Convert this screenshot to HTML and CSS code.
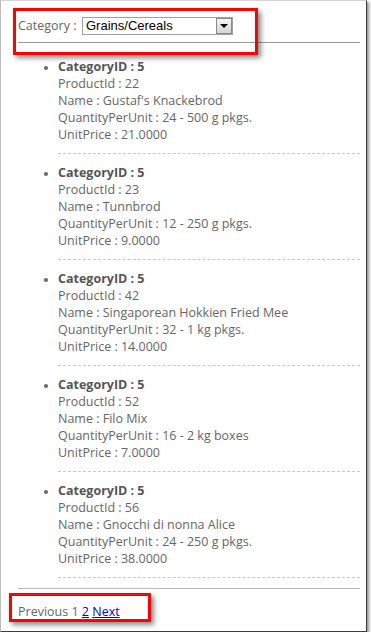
FILE: index.html
```html
<!DOCTYPE html>
<html lang="en">
<head>
  <meta charset="UTF-8">
  <meta name="viewport" content="width=device-width, initial-scale=1.0">
  <title>Products by Category</title>
  <link rel="stylesheet" href="styles.css">
</head>
<body>
  <div class="frame">
    <div class="filter">
      <label class="filter-label">Category :</label>
      <div class="select">
        <span class="select-value">Grains/Cereals</span>
        <span class="select-button"><span class="arrow"></span></span>
      </div>
    </div>
    <hr class="rule">

    <ul class="products">
      <li>
        <strong>CategoryID : 5</strong><br>
        ProductId : 22<br>
        Name : Gustaf's Knackebrod<br>
        QuantityPerUnit : 24 - 500 g pkgs.<br>
        UnitPrice : 21.0000
      </li>
      <li>
        <strong>CategoryID : 5</strong><br>
        ProductId : 23<br>
        Name : Tunnbrod<br>
        QuantityPerUnit : 12 - 250 g pkgs.<br>
        UnitPrice : 9.0000
      </li>
      <li>
        <strong>CategoryID : 5</strong><br>
        ProductId : 42<br>
        Name : Singaporean Hokkien Fried Mee<br>
        QuantityPerUnit : 32 - 1 kg pkgs.<br>
        UnitPrice : 14.0000
      </li>
      <li>
        <strong>CategoryID : 5</strong><br>
        ProductId : 52<br>
        Name : Filo Mix<br>
        QuantityPerUnit : 16 - 2 kg boxes<br>
        UnitPrice : 7.0000
      </li>
      <li>
        <strong>CategoryID : 5</strong><br>
        ProductId : 56<br>
        Name : Gnocchi di nonna Alice<br>
        QuantityPerUnit : 24 - 250 g pkgs.<br>
        UnitPrice : 38.0000
      </li>
    </ul>

    <hr class="rule light">
    <div class="pager">Previous 1 <a href="#">2</a> <a href="#">Next</a></div>

    <!-- highlight boxes drawn over the screenshot -->
    <div class="callout callout-top"></div>
    <div class="callout callout-bottom"></div>
  </div>
</body>
</html>
```

FILE: styles.css
```css
body {
  margin: 0;
  padding: 0;
  background-color: #fff;
  font-family: "Open Sans", "Noto Sans", sans-serif;
  font-size: 12.5px;
  color: #666;
}

.frame {
  position: relative;
  box-sizing: border-box;
  width: 367px;
  height: 632px;
  padding: 9px 6px 0 17px;
  background-color: #fff;
  border-top: 1px solid #d4d4d4;
  border-left: 1px solid #bdbdbd;
  border-right: 1px solid #3c3c3c;
  border-bottom: 1px solid #3c3c3c;
  box-shadow: 2px 2px 3px rgba(0, 0, 0, 0.45);
}

.filter {
  display: flex;
  align-items: center;
  height: 17px;
  padding-top: 7px;
}

.filter-label {
  width: 64px;
  line-height: 17px;
}

.select {
  display: flex;
  align-items: center;
  box-sizing: border-box;
  width: 151px;
  height: 18px;
  border: 1px solid #a0a0a0;
  background-color: #fff;
}

.select-value {
  flex: 1;
  padding-left: 3px;
  font-family: "Liberation Sans", Arial, sans-serif;
  font-size: 13px;
  color: #000;
}

.select-button {
  display: flex;
  align-items: center;
  justify-content: center;
  box-sizing: border-box;
  width: 16px;
  height: 16px;
  border: 1px solid #8a8a8a;
  background: linear-gradient(#f4f4f4, #d6d6d6);
}

.arrow {
  width: 0;
  height: 0;
  border-left: 4px solid transparent;
  border-right: 4px solid transparent;
  border-top: 4px solid #000;
}

.rule {
  margin: 8px 0 0 0;
  border: none;
  border-top: 1px solid #999;
}

.rule.light {
  margin-top: 10px;
  border-top-color: #bbb;
}

.products {
  margin: 15px 0 0 0;
  padding-left: 40px;
  line-height: 17px;
}

.products li {
  padding-bottom: 10px;
  margin-bottom: 10px;
  border-bottom: 1px dashed #c8c8c8;
}

.products li::marker {
  font-size: 10px;
}

.products li:last-child {
  margin-bottom: 0;
}

.products strong {
  color: #555;
}

.pager {
  margin-top: 14px;
  line-height: 17px;
}

.pager a {
  color: #00e;
}

.callout {
  position: absolute;
  box-sizing: border-box;
  border: 3px solid #f00;
  box-shadow: 3px 3px 5px rgba(0, 0, 0, 0.45);
}

.callout-top {
  left: 12px;
  top: 7px;
  width: 245px;
  height: 47px;
}

.callout-bottom {
  left: 8px;
  top: 592px;
  width: 142px;
  height: 29px;
}
```
